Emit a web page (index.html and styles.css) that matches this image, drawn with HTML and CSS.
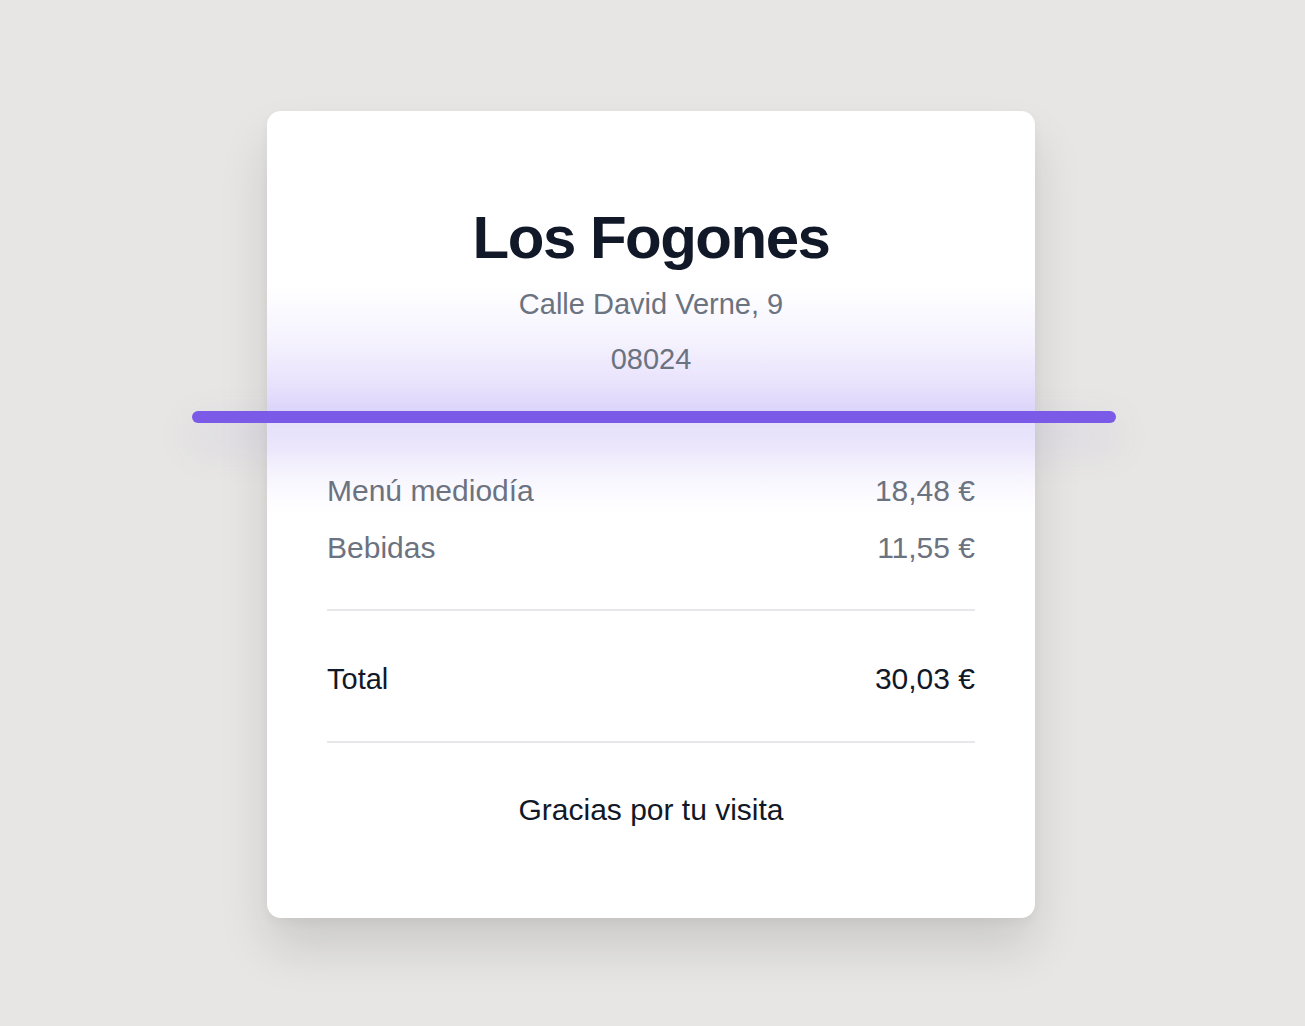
FILE: index.html
```html
<!DOCTYPE html>
<html lang="es">
<head>
    <meta charset="UTF-8">
    <meta name="viewport" content="width=device-width, initial-scale=1.0">
    <title>Los Fogones - Ticket</title>
    <link rel="stylesheet" href="styles.css">
</head>
<body>
    <div class="receipt">
        <div class="scan-glow-top"></div>
        <div class="scan-glow-bottom"></div>
        <div class="scan-line"></div>

        <div class="receipt-header">
            <h1>Los Fogones</h1>
            <p class="address">Calle David Verne, 9</p>
            <p class="address">08024</p>
        </div>

        <div class="items">
            <div class="item">
                <span>Menú mediodía</span>
                <span>18,48 €</span>
            </div>
            <div class="item">
                <span>Bebidas</span>
                <span>11,55 €</span>
            </div>
        </div>

        <div class="item total">
            <span>Total</span>
            <span>30,03 €</span>
        </div>

        <p class="thanks">Gracias por tu visita</p>
    </div>
</body>
</html>
```

FILE: styles.css
```css
body {
    font-family: "Liberation Sans", Arial, sans-serif;
    margin: 0;
    background-color: #e7e6e4;
    min-height: 100vh;
    display: flex;
    justify-content: center;
    padding: 111px 3px 0 0;
    box-sizing: border-box;
}

.receipt {
    position: relative;
    width: 768px;
    box-sizing: border-box;
    padding: 91px 60px 80px;
    background-color: #fff;
    border-radius: 14px;
    box-shadow: 0 30px 50px rgba(0, 0, 0, 0.12), 0 4px 12px rgba(0, 0, 0, 0.04);
    align-self: flex-start;
}

/* scanner overlay */
.scan-glow-top {
    position: absolute;
    left: 0;
    right: 0;
    top: 174px;
    height: 126px;
    background: linear-gradient(to bottom, rgba(124, 92, 240, 0) 0%, rgba(124, 92, 240, 0.08) 45%, rgba(124, 92, 240, 0.24) 100%);
}

.scan-glow-bottom {
    position: absolute;
    left: 0;
    right: 0;
    top: 312px;
    height: 90px;
    background: linear-gradient(to bottom, rgba(124, 92, 240, 0.14), rgba(124, 92, 240, 0));
}

.scan-line {
    position: absolute;
    top: 300px;
    left: -75px;
    width: 924px;
    height: 12px;
    border-radius: 6px;
    background-color: #7a5ae6;
    box-shadow: 0 18px 40px rgba(110, 85, 210, 0.22);
}

.receipt-header {
    position: relative;
    text-align: center;
}

h1 {
    margin: 0 0 3px;
    font-size: 60px;
    line-height: 72px;
    font-weight: 700;
    letter-spacing: -1.5px;
    color: #111827;
}

.address {
    margin: 0;
    font-size: 29px;
    line-height: 55px;
    color: #6b7280;
}

.items {
    position: relative;
    margin-top: 75px;
    padding-bottom: 33px;
    border-bottom: 2px solid #e5e7eb;
}

.item {
    display: flex;
    justify-content: space-between;
    align-items: baseline;
    font-size: 30px;
    line-height: 57px;
    color: #6b7280;
}

.total {
    padding: 39px 0 33px;
    border-bottom: 2px solid #e5e7eb;
    color: #111827;
}

.total span:first-child {
    font-size: 29px;
}

.thanks {
    margin: 38px 0 0;
    text-align: center;
    font-size: 30px;
    line-height: 57px;
    color: #111827;
}
```
